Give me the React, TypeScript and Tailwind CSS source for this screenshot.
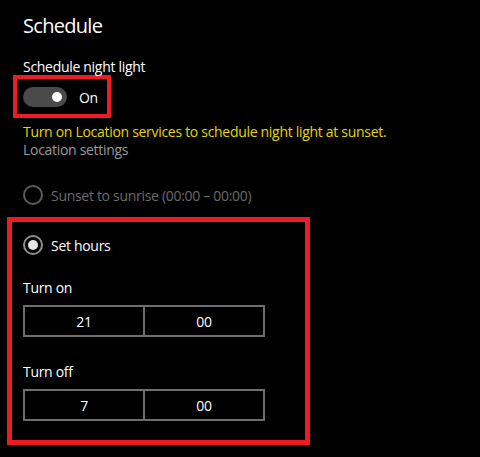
import React from 'react';

function Radio({ checked, disabled, label }: { checked?: boolean; disabled?: boolean; label: string }) {
  return (
    <div className="flex h-[20px] items-center">
      <div
        className={`flex h-[20px] w-[20px] items-center justify-center rounded-full border-2 ${
          disabled ? 'border-[#5c5c5c]' : 'border-[#8c8c8c]'
        }`}
      >
        {checked && <div className="h-[10px] w-[10px] rounded-full bg-[#e6e6e6]" />}
      </div>
      <span
        className={`ml-[8px] pt-[2px] text-[14px] leading-[20px] ${disabled ? 'text-[#6b6b6b]' : 'text-white'}`}
      >
        {label}
      </span>
    </div>
  );
}

function TimePicker({ hour, minute }: { hour: string; minute: string }) {
  return (
    <div className="flex h-[32px] w-[242px] border-2 border-[#6e6e6e] text-[14px] text-white">
      <div className="flex flex-1 items-center justify-center border-r-2 border-[#6e6e6e]">{hour}</div>
      <div className="flex flex-1 items-center justify-center">{minute}</div>
    </div>
  );
}

export default function App() {
  return (
    <div
      className="h-[457px] w-[480px] overflow-hidden bg-black pl-[23px] tracking-[-0.3px] text-white"
      style={{ fontFamily: '"Open Sans", "Noto Sans", sans-serif' }}
    >
      <h2 className="mt-[14px] h-[24px] text-[20px] leading-[24px] tracking-[-0.7px]">Schedule</h2>

      <div className="mt-[19px] h-[19px] text-[14px] leading-[19px]">Schedule night light</div>

      {/* Toggle (highlighted) */}
      <div className="ml-[-10px] mt-[-1px] flex h-[43px] w-[98px] items-center border-4 border-[#ed1c24] pl-[6px]">
        <div className="flex h-[20px] w-[44px] items-center justify-end rounded-full bg-[#4a4a4a] pr-[5px]">
          <div className="h-[10px] w-[10px] rounded-full bg-white" />
        </div>
        <span className="ml-[12px] pt-[1px] text-[14px]">On</span>
      </div>

      <div className="mt-[5px] h-[18px] text-[14px] leading-[18px] text-[#e6d700]">
        Turn on Location services to schedule night light at sunset.
      </div>
      <div className="h-[18px] text-[14px] leading-[18px] text-[#9a9a9a]">Location settings</div>

      <div className="mt-[26px]">
        <Radio disabled label="Sunset to sunrise (00:00 – 00:00)" />
      </div>

      {/* Set hours (highlighted) */}
      <div className="ml-[-16px] mt-[12px] h-[228px] w-[303px] border-[5px] border-[#ed1c24] pl-[11px] pt-[13px]">
        <Radio checked label="Set hours" />

        <div className="mt-[23px] h-[20px] text-[14px] leading-[20px]">Turn on</div>
        <div className="mt-[7px]">
          <TimePicker hour="21" minute="00" />
        </div>

        <div className="mt-[25px] h-[20px] text-[14px] leading-[20px]">Turn off</div>
        <div className="mt-[7px]">
          <TimePicker hour="7" minute="00" />
        </div>
      </div>
    </div>
  );
}
